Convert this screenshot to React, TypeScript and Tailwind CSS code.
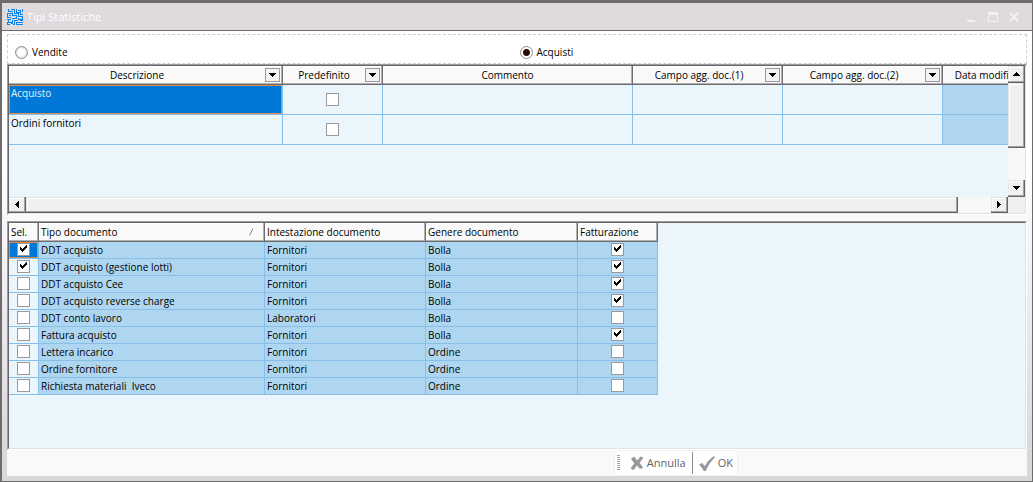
import React, { useState } from "react";

const statistics = ["Acquisto", "Ordini fornitori"];

const documentTypes = [
  { name: "DDT acquisto", holder: "Fornitori", kind: "Bolla", selected: true, invoiced: true },
  { name: "DDT acquisto (gestione lotti)", holder: "Fornitori", kind: "Bolla", selected: true, invoiced: true },
  { name: "DDT acquisto Cee", holder: "Fornitori", kind: "Bolla", selected: false, invoiced: true },
  { name: "DDT acquisto reverse charge", holder: "Fornitori", kind: "Bolla", selected: false, invoiced: true },
  { name: "DDT conto lavoro", holder: "Laboratori", kind: "Bolla", selected: false, invoiced: false },
  { name: "Fattura acquisto", holder: "Fornitori", kind: "Bolla", selected: false, invoiced: true },
  { name: "Lettera incarico", holder: "Fornitori", kind: "Ordine", selected: false, invoiced: false },
  { name: "Ordine fornitore", holder: "Fornitori", kind: "Ordine", selected: false, invoiced: false },
  { name: "Richiesta materiali  Iveco", holder: "Fornitori", kind: "Ordine", selected: false, invoiced: false },
];

const headCell =
  "h-[19px] p-0 font-normal bg-[#f9f9f9] border-r border-b border-[#6d6b6d] shadow-[inset_-1px_-1px_0_#b0b0b0,inset_1px_1px_0_#ffffff]";
const panel =
  "border-t border-l border-r border-b border-t-[#9d9b9d] border-l-[#9d9b9d] border-r-white border-b-white";
const panelInner =
  "border-t border-l border-r border-b border-t-[#676567] border-l-[#676567] border-r-[#e2e2e2] border-b-[#e2e2e2] bg-[#eaf5fc]";

const Check = ({ label, checked = false }: { label: string; checked?: boolean }) => (
  <span className="inline-grid size-[13px]">
    <input
      type="checkbox"
      aria-label={label}
      defaultChecked={checked}
      className="peer col-start-1 row-start-1 size-[13px] appearance-none border border-[#9b999b] bg-white"
    />
    <svg
      viewBox="0 0 13 13"
      className="pointer-events-none col-start-1 row-start-1 hidden size-[13px] peer-checked:block"
      shapeRendering="crispEdges"
    >
      <path
        fill="#000"
        d="M3 4h1v1h1v1h1v-1h1v-1h1v-1h1v-1h1v3h-1v1h-1v1h-1v1h-1v1h-1v-1h-1v-1h-1z"
      />
    </svg>
  </span>
);

interface RadioProps {
  label: string;
  checked: boolean;
  onChange: () => void;
}

const Radio = ({ label, checked, onChange }: RadioProps) => (
  <label className="flex items-center gap-1">
    <input
      type="radio"
      name="kind"
      checked={checked}
      onChange={onChange}
      className="size-[13px] appearance-none rounded-full border border-[#8e8f80] bg-[radial-gradient(circle,#ffffff_40%,#dddddd_75%)] checked:bg-[radial-gradient(circle,#2a0a08_0,#2a0a08_3px,#ffffff_4px)]"
    />
    {label}
  </label>
);

const FilterButton = ({ label }: { label: string }) => (
  <button
    aria-label={`Filtra ${label}`}
    className="mr-[2px] flex h-[14px] w-[15px] shrink-0 items-center justify-center border border-[#9b999b] bg-[#f3f3f3]"
  >
    <svg viewBox="0 0 7 4" className="h-1 w-[7px]" shapeRendering="crispEdges">
      <path d="M0 0h7v1h-1v1h-1v1h-1v1h-1v-1h-1v-1h-1v-1h-1z" />
    </svg>
  </button>
);

const StatHead = ({ label, filter = true }: { label: string; filter?: boolean }) => (
  <th className={headCell}>
    <div className="flex h-[18px] items-center">
      <span className="flex-1 text-center">{label}</span>
      {filter && <FilterButton label={label} />}
    </div>
  </th>
);

const arrows = {
  up: "M3 0h1v1h1v1h1v1h1v1h-7v-1h1v-1h1v-1h1z",
  down: "M0 0h7v1h-1v1h-1v1h-1v1h-1v-1h-1v-1h-1v-1h-1z",
  left: "M3 0h1v7h-1v-1h-1v-1h-1v-1h-1v-1h1v-1h1v-1h1z",
  right: "M0 0h1v1h1v1h1v1h1v1h-1v1h-1v1h-1v1h-1z",
};

const raised =
  "bg-[#f0f0f0] border-r border-b border-[#676567] shadow-[inset_-1px_-1px_0_#a3a1a3,inset_1px_1px_0_#e6e6e6,inset_2px_2px_0_#ffffff]";
const track =
  "bg-[repeating-conic-gradient(#ffffff_0_25%,#f0f0f0_0_50%)] bg-[length:2px_2px]";

const ScrollButton = ({ direction, label }: { direction: keyof typeof arrows; label: string }) => {
  const vertical = direction === "up" || direction === "down";
  return (
    <button
      aria-label={label}
      className={`flex w-[17px] shrink-0 items-center justify-center ${vertical ? "h-[17px]" : "h-4"} ${raised}`}
    >
      <svg
        viewBox={vertical ? "0 0 7 4" : "0 0 4 7"}
        className={vertical ? "h-1 w-[7px]" : "h-[7px] w-1"}
        shapeRendering="crispEdges"
      >
        <path d={arrows[direction]} />
      </svg>
    </button>
  );
};

const TitleBar = () => (
  <header className="flex h-7 items-center border-b border-[#6d696d] bg-[#dedade] pr-[13px] pl-[5px]">
    <svg viewBox="0 0 16 16" className="size-4" fill="none" stroke="#0a84e8" shapeRendering="crispEdges">
      <path d="M1.5 0v2.5h3M3.5 0.5h4v4M6 2.5h-1M9.5 0v3.5h3M11 1.5h2.5v4h2.5M15.5 0v3M0 4.5h5.5v2h3M0.5 5v3.5h3M2 6.5h2M7.5 4.5h4v3h3M9.5 6v3.5h-4v-1M15.5 7v3.5h-4v-2M0 10.5h3.5v-1M1.5 10v3h3M0.5 13v2.5h2M5.5 10.5v4h-2M7.5 11v4.5h-2M7 11.5h4M9.5 13.5h6.5M9.5 13v2.5h6M12.5 11.5h3.5" />
    </svg>
    <h1 className="ml-1 text-[11px] text-white">Tipi Statistiche</h1>
    <div className="ml-auto flex items-center gap-[11px] text-[#f3f1f3]">
      <button aria-label="Riduci a icona" className="flex h-[10px] w-[10px] items-end">
        <span className="h-[2px] w-2 bg-[#f3f1f3]" />
      </button>
      <button aria-label="Ingrandisci" className="h-[10px] w-[10px] border border-t-[3px] border-[#f3f1f3]" />
      <button aria-label="Chiudi" className="h-[10px] w-[10px]">
        <svg viewBox="0 0 10 10" className="size-[10px]" stroke="currentColor" strokeWidth="2.4">
          <path d="M1 1l8 8M9 1l-8 8" />
        </svg>
      </button>
    </div>
  </header>
);

const StatisticsGrid = () => (
  <section className={panel}>
    <div className={`flex flex-col ${panelInner}`}>
      <div className="flex h-[131px]">
        <div className="min-w-0 flex-1 overflow-hidden">
          <table className="w-[1040px] table-fixed border-separate border-spacing-0">
            <colgroup>
              <col className="w-[274px]" />
              <col className="w-[100px]" />
              <col className="w-[250px]" />
              <col className="w-[150px]" />
              <col className="w-[160px]" />
              <col className="w-[106px]" />
            </colgroup>
            <thead>
              <tr>
                <StatHead label="Descrizione" />
                <StatHead label="Predefinito" />
                <StatHead label="Commento" filter={false} />
                <StatHead label="Campo agg. doc.(1)" />
                <StatHead label="Campo agg. doc.(2)" />
                <StatHead label="Data modifica" />
              </tr>
            </thead>
            <tbody>
              {statistics.map((name, i) => (
                <tr key={name} className="[&>td]:h-[30px] [&>td]:border-r [&>td]:border-b [&>td]:border-[#87bfe8] [&>td]:p-0">
                  <td>
                    <div
                      className={
                        i === 0
                          ? "h-[29px] border border-[#e08a4a] bg-[#0078d7] px-px text-[#e4effa]"
                          : "h-[29px] border border-transparent px-px"
                      }
                    >
                      {name}
                    </div>
                  </td>
                  <td>
                    <div className="flex justify-center">
                      <Check label={`Predefinito ${name}`} />
                    </div>
                  </td>
                  <td />
                  <td />
                  <td />
                  <td className="bg-[#aed6f0]" />
                </tr>
              ))}
            </tbody>
          </table>
        </div>
        <div className={`flex w-[17px] flex-col ${track}`}>
          <ScrollButton direction="up" label="Scorri su" />
          <div className={`h-[65px] ${raised}`} />
          <div className="flex-1" />
          <ScrollButton direction="down" label="Scorri giù" />
        </div>
      </div>
      <div className="flex h-4 bg-[#f0f0f0]">
        <div className={`flex min-w-0 flex-1 ${track}`}>
          <ScrollButton direction="left" label="Scorri a sinistra" />
          <div className={`flex-1 ${raised}`} />
          <div className="w-[33px]" />
          <ScrollButton direction="right" label="Scorri a destra" />
        </div>
        <div className="w-[17px]" />
      </div>
    </div>
  </section>
);

const DocumentsGrid = () => (
  <section className={`flex flex-1 flex-col ${panel}`}>
    <div className={`flex-1 ${panelInner}`}>
      <table className="w-[649px] table-fixed border-separate border-spacing-0 text-left">
        <colgroup>
          <col className="w-[30px]" />
          <col className="w-[226px]" />
          <col className="w-[161px]" />
          <col className="w-[152px]" />
          <col className="w-[80px]" />
        </colgroup>
        <thead>
          <tr>
            <th className={`${headCell} pl-[2px]`}>Sel.</th>
            <th className={`${headCell} pl-[2px]`}>
              <div className="flex items-center justify-between pr-[7px]">
                Tipo documento
                <svg viewBox="0 0 8 8" className="size-2" fill="none">
                  <path d="M4 0.5L7.5 7.5H0.5" stroke="#ffffff" />
                  <path d="M0.5 7.5L4 0.5" stroke="#8a888a" />
                </svg>
              </div>
            </th>
            <th className={`${headCell} pl-[2px]`}>Intestazione documento</th>
            <th className={`${headCell} pl-[2px]`}>Genere documento</th>
            <th className={`${headCell} pl-[2px]`}>Fatturazione</th>
          </tr>
        </thead>
        <tbody>
          {documentTypes.map((doc, i) => (
            <tr
              key={doc.name}
              className="bg-[#aed6f0] [&>td]:h-[17px] [&>td]:border-r [&>td]:border-b [&>td]:border-[#87bfe8] [&>td]:p-0 [&>td]:pl-[2px]"
            >
              <td className="bg-[#eaf5fc] !pl-0">
                <div
                  className={
                    i === 0
                      ? "flex h-4 justify-center bg-[#0078d7] pt-px outline -outline-offset-1 outline-[#e08a4a]"
                      : "flex h-4 justify-center pt-px"
                  }
                >
                  <Check label={`Seleziona ${doc.name}`} checked={doc.selected} />
                </div>
              </td>
              <td className="whitespace-pre">{doc.name}</td>
              <td>{doc.holder}</td>
              <td>{doc.kind}</td>
              <td className="!pl-0">
                <div className="flex h-4 justify-center pt-px">
                  <Check label={`Fatturazione ${doc.name}`} checked={doc.invoiced} />
                </div>
              </td>
            </tr>
          ))}
        </tbody>
      </table>
    </div>
  </section>
);

const Footer = () => (
  <footer className="flex h-[26px] bg-[#f9f9f9]">
    <div className="mr-[289px] ml-auto flex items-center rounded-sm border border-[#f0f0f0] bg-white text-[11px] text-[#666466]">
      <span className="mx-[2px] h-4 w-[3px] bg-[repeating-linear-gradient(#a3a1a3_0_1px,transparent_1px_2px)]" />
      <button className="flex h-[22px] items-center gap-[3px] border-r border-[#8f8d8f] pr-[6px] pl-2">
        <svg viewBox="0 0 14 14" className="size-[14px]" fill="#9a989a">
          <path d="M1 3L4 0.5L7.3 4.4L10.5 0.5L13.5 1.5L9.6 7L13.2 11.5L10 13L7 9.6L3.5 14L0.5 12.5L4.4 7.2Z" />
        </svg>
        Annulla
      </button>
      <button className="flex h-[22px] items-center gap-[3px] pr-1 pl-[6px]">
        <svg viewBox="0 0 16 15" className="h-[15px] w-4" fill="#9a989a">
          <path d="M0 8.5L3 7L5.8 10Q9 4 15 0L16 1.2Q10 7 6.8 15H4.8Q3 11 0 8.5Z" />
        </svg>
        OK
      </button>
    </div>
  </footer>
);

const App = () => {
  const [kind, setKind] = useState("acquisti");

  return (
    <div className="flex min-h-screen flex-col border-t-[3px] border-r border-b border-l-2 border-[#6d6b6d] bg-white font-['Open_Sans','Noto_Sans',sans-serif] text-[10px] leading-[14px] text-black">
      <TitleBar />
      <main className="flex flex-1 flex-col bg-linear-to-b from-white from-30% to-[#d9d7d9] to-95% px-[5px] pt-[3px] pb-[5px]">
        <div className="grid h-[30px] grid-cols-2 items-center border border-dashed border-[#cfcdcf] bg-white pt-[6px] pr-[2px] pl-[7px]">
          <Radio label="Vendite" checked={kind === "vendite"} onChange={() => setKind("vendite")} />
          <Radio label="Acquisti" checked={kind === "acquisti"} onChange={() => setKind("acquisti")} />
        </div>
        <StatisticsGrid />
        <div className="h-[6px] bg-[#f9f9f9]" />
        <DocumentsGrid />
        <Footer />
      </main>
    </div>
  );
};

export default App;
